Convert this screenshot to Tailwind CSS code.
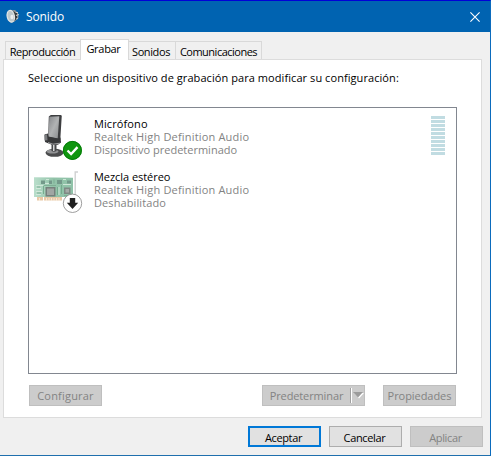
<!DOCTYPE html>
<html lang="es">
<head>
<meta charset="utf-8">
<title>Sonido</title>
<script src="https://cdn.jsdelivr.net/npm/@tailwindcss/browser@4"></script>
</head>
<body class="w-[491px] h-[456px] overflow-hidden bg-[#f0f0f0] font-['Open_Sans','Noto_Sans',sans-serif] text-[11px] leading-[13px] text-black whitespace-nowrap">
<div class="w-[491px] h-[456px] flex flex-col border-t border-r border-b border-t-[#0000d8] border-r-[#0b6bbd] border-b-[#1f6fad]">
  <header class="h-[31px] shrink-0 bg-[#0063b1] text-white flex items-center pl-[6px] pr-[10px]">
    <svg class="w-[14px] h-4" viewBox="0 0 14 16">
      <path d="M4 1.500 9 1l3 3 .5 5L8 13l-4 .5z" fill="#8d9396"/>
      <path d="M7 2.500l4 1v6.500l-4 2.500z" fill="#34393b"/>
      <path d="M9.500 3.500h2.500M10 6.500l3-1M10 10l2-.5" stroke="#c9cdce" stroke-width="1.200"/>
      <ellipse cx="4.800" cy="7.300" rx="3.600" ry="5.900" transform="rotate(-12 4.800 7.300)" fill="#bdc8cb" stroke="#e3e6e5" stroke-width="1.200"/>
      <ellipse cx="6" cy="8" rx="1.600" ry="2.200" fill="#eceeee"/>
    </svg>
    <span class="ml-[6px] text-[12px] leading-4 -tracking-[0.1px]">Sonido</span>
    <svg class="w-[10px] h-[10px] ml-auto" viewBox="0 0 10 10"><path d="M.4.4l9.2 9.2M9.6.4L.4 9.6" stroke="#fff" stroke-width="1.1"/></svg>
  </header>

  <nav class="h-[27px] shrink-0 flex items-end pl-[5px] relative z-10 tracking-[-0.45px]">
    <div class="w-[76px] h-[18px] border border-b-0 border-r-0 border-[#d9d9d9] flex items-center justify-center pt-px pr-[2px]">Reproducción</div>
    <div class="w-[49px] h-[21px] -mb-px bg-white border border-b-0 border-[#d9d9d9] flex items-start justify-center pt-[2px] pr-[2px] tracking-[-0.3px] relative -left-px">Grabar</div>
    <div class="w-[47px] h-[18px] border-t border-r border-[#d9d9d9] flex items-center justify-center pt-px pr-[2px] -ml-px tracking-[-0.4px]">Sonidos</div>
    <div class="w-[86px] h-[18px] border-t border-r border-[#d9d9d9] flex items-center justify-center pt-px tracking-[-0.5px]">Comunicaciones</div>
  </nav>

  <main class="ml-[3px] w-[479px] h-[359px] shrink-0 bg-white border border-[#dcdcdc] flex flex-col pl-6 pt-[11px]">
    <p class="tracking-[0.07px]">Seleccione un dispositivo de grabación para modificar su configuración:</p>
    <section class="mt-[23px] w-[429px] h-[267px] border border-[#828790] pt-[7px]">
      <div class="h-[53px] flex">
        <svg class="w-[50px] h-[46px] ml-[5px]" viewBox="34 115 50 46">
          <defs>
            <linearGradient id="grille" x1="0" y1="0" x2="1" y2="1"><stop offset="0" stop-color="#85878a"/><stop offset=".5" stop-color="#b1b3b4"/><stop offset="1" stop-color="#8a8c8e"/></linearGradient>
          </defs>
          <ellipse cx="54.500" cy="152.800" rx="9" ry="4" fill="#4b4c4d"/>
          <ellipse cx="52.500" cy="151.500" rx="6" ry="2" fill="#929395"/>
          <path d="M51.500 144h5v7q-2.500 1.500-5 0z" fill="#47484a"/>
          <path d="M53 144h1.500v7H53z" fill="#d4d5d6"/>
          <path d="M48.800 116.500l2-1.500 9.700-.2 1.300 1-1.600 24.700-2.500 1-9.500-3z" fill="#3d3e40"/>
          <path d="M49.300 116.700l10-.5-1.600 22.300-9.200-1.500z" fill="url(#grille)"/>
          <path d="M44.500 134.500l3.500-1 .5 3 9.500 2 2.500-1 .5 5-3 2.200-5.500.3-7.500-3z" fill="#37383a"/>
          <path d="M44.500 135l2.500-.8.5 6-3 .3z" fill="#797b7d"/>
          <path d="M48 142.500l5 1.700 7-1" fill="none" stroke="#a1a2a4" stroke-width="1"/>
          <circle cx="72.400" cy="150.400" r="9.500" fill="#10960f"/>
          <circle cx="72.400" cy="150.400" r="9" fill="none" stroke="#047c08" stroke-width="1"/>
          <path d="M67.500 150.500l3.600 3.600 6.400-7" fill="none" stroke="#fff" stroke-width="2.300"/>
        </svg>
        <div class="ml-[10px] mt-[2px] text-[#838383]">
          <div class="text-black tracking-[0.1px]">Micrófono</div>
          <div class="tracking-[0.18px]">Realtek High Definition Audio</div>
          <div>Dispositivo predeterminado</div>
        </div>
        <div class="ml-auto mr-[11px] mt-px w-[14px] flex flex-col gap-px">
          <i class="h-[3px] bg-[#c1dce2]"></i><i class="h-[3px] bg-[#c1dce2]"></i><i class="h-[3px] bg-[#c1dce2]"></i><i class="h-[3px] bg-[#c1dce2]"></i><i class="h-[3px] bg-[#c1dce2]"></i><i class="h-[3px] bg-[#c1dce2]"></i><i class="h-[3px] bg-[#c1dce2]"></i><i class="h-[3px] bg-[#c1dce2]"></i><i class="h-[3px] bg-[#c1dce2]"></i><i class="h-[3px] bg-[#c1dce2]"></i>
        </div>
      </div>
      <div class="h-[53px] flex">
        <svg class="w-[50px] h-[46px] ml-[5px]" viewBox="34 168 50 46">
          <defs>
            <linearGradient id="board"><stop offset="0" stop-color="#b9decb"/><stop offset=".5" stop-color="#92c3a9"/><stop offset="1" stop-color="#8fc2a8"/></linearGradient>
          </defs>
          <path d="M78 172h-2.800v31" fill="none" stroke="#d0d1d2" stroke-width="1.400"/>
          <path d="M34 177.300l39 .4v19.300H34z" fill="url(#board)"/>
          <path d="M37 197h6v3.500h-6zM44 197h18v3.500H44z" fill="#e9c9a6"/>
          <path d="M39.500 198v3M46.500 198v3M49 198v3M51.500 198v3M54 198v3M56.500 198v3M59 198v3" stroke="#f8eee2" stroke-width=".8"/>
          <path d="M36 185.500h7M36 188.500h5M36 191.500h6M36 194.500h5M44 183.500h8M59 187v8M63 184.500h8M46 179.500h3M63 179.500h3" stroke="#d5eadd" stroke-width=".9"/>
          <path d="M43.500 186v8M57.500 187v8M61.500 185v9" stroke="#70a78a" stroke-width=".9"/>
          <path d="M37 187h3M37 193h4M44 185.500h12M64 195.500h6M54 179.500v4" stroke="#7cab92" stroke-width=".9"/>
          <path d="M41 180.500h4v3.500h-4zM49 180.500h3v3.500h-3zM57 180h5v4h-5zM67 180.500h4v3h-4z" fill="#73998a"/>
          <path d="M45.500 187h10v9.500h-10z" fill="#76807c"/>
          <path d="M47 188.500h7v6.500h-7z" fill="#a0a6a3"/>
          <path d="M64 187.500h6.500v6.500H64z" fill="#7e8984"/>
          <path d="M65.500 189h3.500v3.500h-3.500z" fill="#a4aba7"/>
          <circle cx="72.500" cy="203.300" r="9.200" fill="#fff" stroke="#858585" stroke-width=".8"/>
          <path d="M69.800 198h5.400v4.800h3L72.500 209l-5.700-6.200h3z" fill="#202020"/>
        </svg>
        <div class="ml-[10px] mt-[2px] text-[#838383]">
          <div class="text-black tracking-[-0.05px]">Mezcla estéreo</div>
          <div class="tracking-[0.18px]">Realtek High Definition Audio</div>
          <div class="tracking-[0.1px]">Deshabilitado</div>
        </div>
      </div>
    </section>
    <div class="mt-[11px] ml-px w-[427px] flex text-[#838383]">
      <button class="w-[73px] h-[21px] bg-[#ccc] border border-[#bfbfbf] tracking-[0.2px]">Configurar</button>
      <button class="ml-auto w-[103px] h-[21px] bg-[#ccc] border border-[#bfbfbf] flex items-center">
        <span class="w-[87px] text-center tracking-[-0.12px]">Predeterminar</span>
        <span class="w-[2px] h-[15px] border-l border-[#a0a0a0] bg-white"></span>
        <svg class="w-[11px] h-[7px] ml-px" viewBox="0 0 11 7"><path d="M1 1h10L6 6.500z" fill="#fff"/><path d="M0 0h10L5 5.500z" fill="#9b9b9b"/></svg>
      </button>
      <button class="ml-[18px] w-[73px] h-[21px] bg-[#ccc] border border-[#bfbfbf] tracking-[-0.05px]">Propiedades</button>
    </div>
  </main>

  <footer class="flex justify-end gap-2 pr-[7px] pt-2 tracking-[-0.35px]">
    <button class="w-[73px] h-[21px] pt-px pr-[2px] bg-[#e1e1e1] border-2 border-[#0078d7]">Aceptar</button>
    <button class="w-[73px] h-[21px] pt-px pr-[2px] bg-[#e1e1e1] border border-[#adadad]">Cancelar</button>
    <button class="w-[73px] h-[21px] pt-px pr-[2px] bg-[#ccc] border border-[#bfbfbf] text-[#838383]">Aplicar</button>
  </footer>
</div>
</body>
</html>
